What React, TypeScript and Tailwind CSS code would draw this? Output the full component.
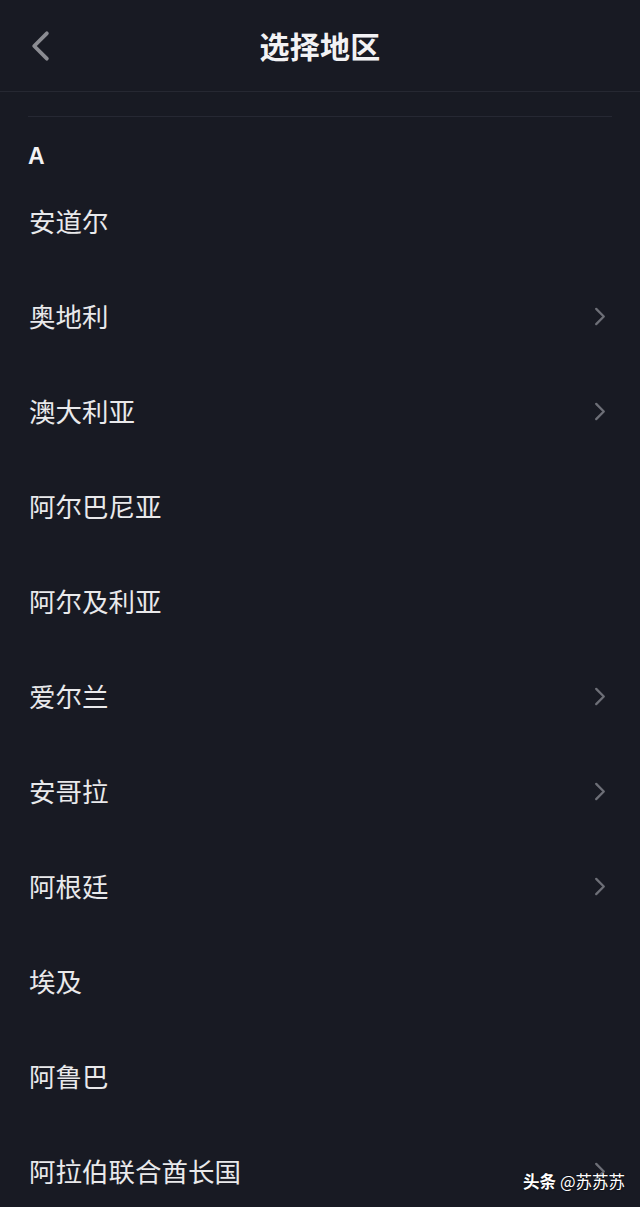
const regions: { name: string; arrow: boolean }[] = [
  { name: '安道尔', arrow: false },
  { name: '奥地利', arrow: true },
  { name: '澳大利亚', arrow: true },
  { name: '阿尔巴尼亚', arrow: false },
  { name: '阿尔及利亚', arrow: false },
  { name: '爱尔兰', arrow: true },
  { name: '安哥拉', arrow: true },
  { name: '阿根廷', arrow: true },
  { name: '埃及', arrow: false },
  { name: '阿鲁巴', arrow: false },
  { name: '阿拉伯联合酋长国', arrow: true },
];

function Chevron({ dir, className }: Readonly<{ dir: 'left' | 'right'; className?: string }>) {
  return (
    <svg viewBox="0 0 12 20" className={className} fill="none" stroke="currentColor" strokeWidth={2.4} strokeLinecap="round" strokeLinejoin="round">
      {dir === 'left' ? <path d="M10 2 L2 10 L10 18" /> : <path d="M2 2 L10 10 L2 18" />}
    </svg>
  );
}

export default function App() {
  return (
    <div
      className="relative h-[1207px] w-[640px] overflow-hidden bg-[#181a23] text-[#e9e9eb]"
      style={{ fontFamily: '"Noto Sans CJK SC", "Noto Sans", sans-serif' }}
    >
      <header className="grid h-[92px] grid-cols-[1fr_auto_1fr] items-center border-b border-[#262832]">
        <div className="pl-[31px]">
          <Chevron dir="left" className="h-[32px] w-[19px] text-[#8b8c92]" />
        </div>
        <h1 className="text-[30px] font-bold tracking-[0.3px] text-[#f2f2f4]">选择地区</h1>
        <div />
      </header>

      <div className="px-[28px]">
        <div className="mt-[24px] h-px bg-[#262833]" />
        <div className="pt-[25px] pb-[4px] text-[23px] leading-[28px] font-bold text-[#f2f2f4]" style={{ fontFamily: '"Liberation Sans", "Noto Sans CJK SC", sans-serif' }}>
          A
        </div>
        <ul>
          {regions.map((r) => (
            <li key={r.name} className="flex h-[95px] items-center justify-between">
              <span className="pl-px text-[26.5px] leading-none">{r.name}</span>
              {r.arrow ? <Chevron dir="right" className="mr-[6px] h-[19px] w-[12px] text-[#6d6f77]" /> : null}
            </li>
          ))}
        </ul>
      </div>

      <div className="absolute right-[15px] bottom-[13px] flex items-baseline gap-[4px] text-[16.5px] text-white [text-shadow:0_0_2px_rgba(0,0,0,0.9)]">
        <span className="font-bold">头条</span>
        <span>@苏苏苏</span>
      </div>
    </div>
  );
}
